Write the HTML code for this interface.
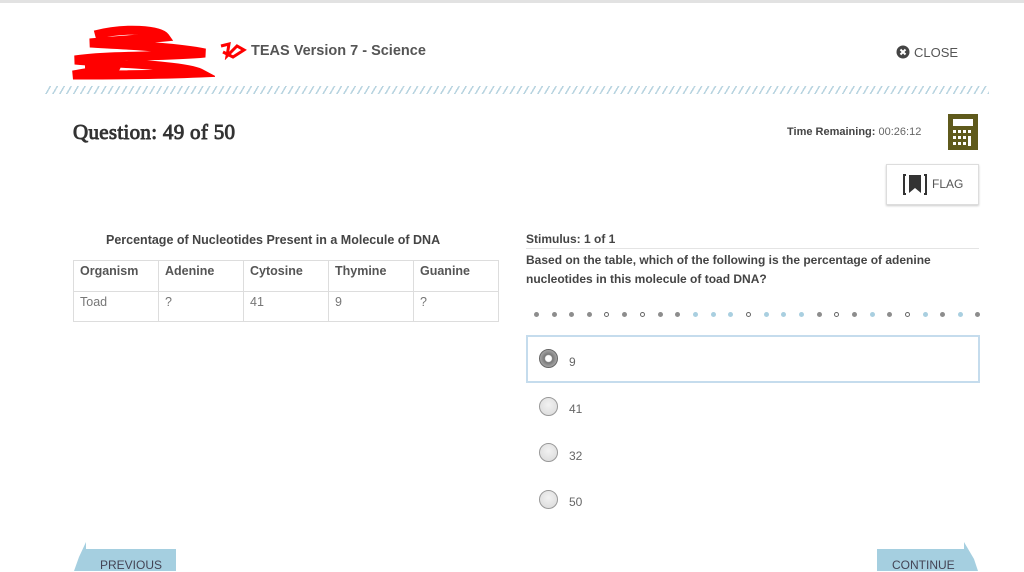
<!DOCTYPE html>
<html><head><meta charset="utf-8"><style>
*{margin:0;padding:0;box-sizing:border-box}
body{width:1024px;height:571px;overflow:hidden;background:#fff;font-family:"Liberation Sans","DejaVu Sans",sans-serif;color:#444;position:relative}
.a{position:absolute;white-space:nowrap}
.topline{position:absolute;left:0;top:0;width:1024px;height:3px;background:#e2e2e2}
.hatch{position:absolute;left:45px;top:86px;width:944px;height:8px;background:repeating-linear-gradient(-60deg,#b8d4e0 0 1.5px,transparent 1.5px 6px)}
table{border-collapse:collapse;font-size:12.5px}
td{border:1px solid #ddd;height:30px;padding:3px 6px 0;width:85px;vertical-align:top}
th{border:1px solid #ddd;height:31px;padding:3px 6px 0;text-align:left;font-weight:bold;color:#555;vertical-align:top}
.dot{position:absolute;top:312px;width:5px;height:5px;border-radius:50%;background:#8d8d8d}
.dot.o{background:#fff;border:1.5px solid #666}
.dot.b{background:#a9cfe0}
.radio{position:absolute;left:539px;width:19px;height:19px;border-radius:50%;border:1.5px solid #999;background:radial-gradient(circle at 50% 40%,#f2f2f2,#d8d8d8)}
.opt{position:absolute;left:569px;font-size:12px;color:#666}
</style></head><body>
<div class="topline"></div>
<svg class="a" style="left:65px;top:25px" width="150" height="60"><path d="M30 10 C60 2 95 5 100 12 C80 14 40 16 25 18 C60 20 110 22 140 28 C100 32 40 30 10 35 C40 38 120 40 135 48 C90 50 40 50 8 50 C40 44 80 40 20 42" stroke="#f00" stroke-width="9" fill="none"/></svg>
<svg class="a" style="left:219px;top:42px" width="28" height="18"><path d="M2 4 L10 2 L8 14 L18 4 L25 8 L14 15 L4 10" stroke="#f00" stroke-width="3" fill="none"/></svg>
<div class="a" style="left:251px;top:43px;font-size:14.5px;font-weight:bold;color:#555">TEAS Version 7 - Science</div>
<svg class="a" style="left:896px;top:45px" width="14" height="14"><circle cx="7" cy="7" r="6.5" fill="#444"/><path d="M4.5 4.5L9.5 9.5M9.5 4.5L4.5 9.5" stroke="#fff" stroke-width="2"/></svg>
<div class="a" style="left:914px;top:45px;font-size:13px;color:#555">CLOSE</div>
<div class="hatch"></div>
<div class="a" style="left:73px;top:120px;font-family:'Liberation Serif',serif;font-size:21px;color:#333;-webkit-text-stroke:0.9px #333;letter-spacing:0.3px">Question: 49 of 50</div>
<div class="a" style="left:787px;top:126px;font-size:11px;color:#444"><b>Time Remaining:</b> <span style="color:#666">00:26:12</span></div>
<svg class="a" style="left:948px;top:114px" width="32" height="36"><rect width="30" height="36" fill="#5f5a1c"/><rect x="5" y="5" width="20" height="7" fill="#fff"/><g fill="#fff"><rect x="5" y="16" width="3" height="3"/><rect x="10" y="16" width="3" height="3"/><rect x="15" y="16" width="3" height="3"/><rect x="20" y="16" width="3" height="3"/><rect x="5" y="22" width="3" height="3"/><rect x="10" y="22" width="3" height="3"/><rect x="15" y="22" width="3" height="3"/><rect x="20" y="22" width="3" height="10"/><rect x="5" y="28" width="3" height="3"/><rect x="10" y="28" width="3" height="3"/><rect x="15" y="28" width="3" height="3"/></g></svg>
<div class="a" style="left:886px;top:164px;width:93px;height:41px;border:1px solid #ddd;box-shadow:0 1px 2px #ccc"></div>
<svg class="a" style="left:903px;top:174px" width="24" height="21"><path d="M3 1H1V20H3M21 1H23V20H21" stroke="#333" stroke-width="2" fill="none"/><path d="M6 1H18V19L12 14L6 19Z" fill="#333"/></svg>
<div class="a" style="left:932px;top:177px;font-size:12px;color:#555">FLAG</div>
<div class="a" style="left:106px;top:233px;font-size:12.5px;font-weight:bold;color:#444">Percentage of Nucleotides Present in a Molecule of DNA</div>
<table class="a" style="left:73px;top:260px;width:426px">
<tr><th>Organism</th><th>Adenine</th><th>Cytosine</th><th>Thymine</th><th>Guanine</th></tr>
<tr style="color:#777"><td>Toad</td><td>?</td><td>41</td><td>9</td><td>?</td></tr>
</table>
<div class="a" style="left:526px;top:232px;font-size:12px;font-weight:bold;color:#444">Stimulus: 1 of 1</div>
<div class="a" style="left:526px;top:248px;width:453px;height:1px;background:#e4e4e4"></div>
<div class="a" style="left:526px;top:251px;font-size:12px;font-weight:bold;color:#444;line-height:19px;white-space:normal;width:455px">Based on the table, which of the following is the percentage of adenine nucleotides in this molecule of toad DNA?</div>
<div class="dot" style="left:534px"></div><div class="dot" style="left:552px"></div><div class="dot" style="left:569px"></div><div class="dot" style="left:587px"></div><div class="dot o" style="left:604px"></div><div class="dot" style="left:622px"></div><div class="dot o" style="left:640px"></div><div class="dot" style="left:658px"></div><div class="dot" style="left:675px"></div><div class="dot b" style="left:693px"></div><div class="dot b" style="left:711px"></div><div class="dot b" style="left:728px"></div><div class="dot o" style="left:746px"></div><div class="dot b" style="left:764px"></div><div class="dot b" style="left:781px"></div><div class="dot b" style="left:799px"></div><div class="dot" style="left:817px"></div><div class="dot o" style="left:834px"></div><div class="dot" style="left:852px"></div><div class="dot b" style="left:870px"></div><div class="dot" style="left:887px"></div><div class="dot o" style="left:905px"></div><div class="dot b" style="left:923px"></div><div class="dot" style="left:940px"></div><div class="dot b" style="left:958px"></div><div class="dot" style="left:975px"></div>
<div class="a" style="left:526px;top:335px;width:454px;height:48px;border:2px solid #c5dced"></div>
<div class="radio" style="top:349px;background:radial-gradient(circle,#fff 0 3px,#777 4px,#aaa 9px);border-color:#666"></div>
<div class="opt" style="top:355px">9</div>
<div class="radio" style="top:397px"></div><div class="opt" style="top:402px">41</div>
<div class="radio" style="top:443px"></div><div class="opt" style="top:449px">32</div>
<div class="radio" style="top:490px"></div><div class="opt" style="top:495px">50</div>
<svg class="a" style="left:72px;top:541px" width="106" height="30"><path d="M14 1V8H104V30H2L7 16Z" fill="#a5cfe0"/></svg>
<div class="a" style="left:100px;top:558px;font-size:12px;color:#445">PREVIOUS</div>
<svg class="a" style="left:876px;top:541px" width="104" height="30"><path d="M88 1V8H1V30H102L98 18Z" fill="#a5cfe0"/></svg>
<div class="a" style="left:892px;top:558px;font-size:12px;color:#445">CONTINUE</div>
</body></html>
